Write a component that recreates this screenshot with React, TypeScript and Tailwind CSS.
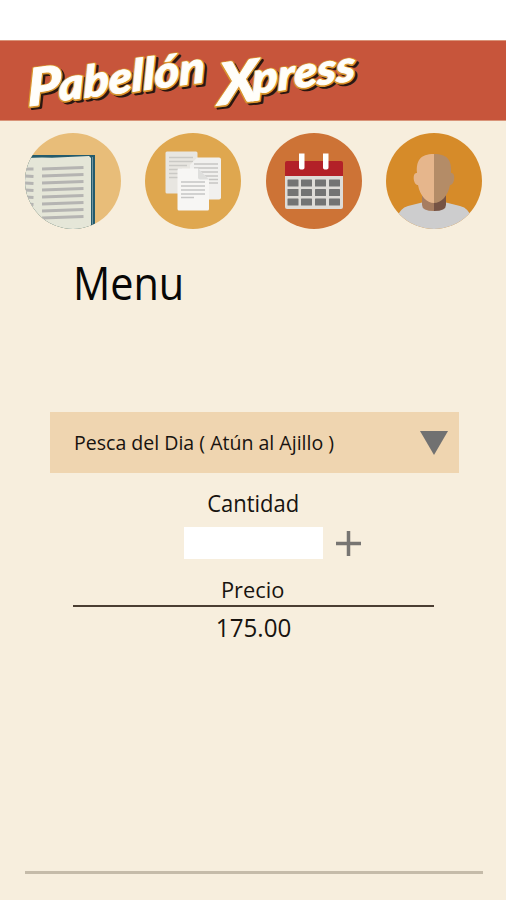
import React from 'react';

function Logo() {
  const words = (
    <>
      <g transform="translate(26 66) rotate(-7.500) skewX(-6)">
        <text fontSize="52" textLength="34" lengthAdjust="spacingAndGlyphs">P</text>
        <text x="32" y="-1" fontSize="44" textLength="149" lengthAdjust="spacingAndGlyphs">abellón</text>
      </g>
      <g transform="translate(219 65) rotate(-7.500) skewX(-6)">
        <text fontSize="58" textLength="41" lengthAdjust="spacingAndGlyphs">X</text>
        <text x="35" y="-7" fontSize="43" textLength="105" lengthAdjust="spacingAndGlyphs">press</text>
      </g>
    </>
  );
  const face = "font-['Lato'] font-black italic";
  return (
    <svg className="block h-full w-[380px] overflow-visible" viewBox="0 0 380 80" role="img" aria-label="Pabellón Xpress">
      <g className={face} transform="translate(2.500 2.500)" fill="#2b1710" stroke="#2b1710" strokeWidth="3" strokeLinejoin="round">{words}</g>
      <g className={face} transform="translate(0 .5)" fill="#d9952f" stroke="#d9952f" strokeWidth="3.500" strokeLinejoin="round">{words}</g>
      <g className={face} fill="#fffefa" stroke="#fffefa" strokeWidth="1" strokeLinejoin="round">{words}</g>
    </svg>
  );
}

function BookIcon() {
  return (
    <svg className="size-24" viewBox="0 0 96 96">
      <clipPath id="book-clip"><circle cx="48" cy="48" r="48" /></clipPath>
      <g clipPath="url(#book-clip)">
        <rect width="96" height="96" fill="#e8bd79" />
        <path d="M0 22h70v71l-4 4H0z" fill="#245b6c" />
        <path d="M67.5 24v72" stroke="#7294a0" strokeWidth="1" />
        <path d="M0 25l17-.5 10 .3 37-1.800L66 25v71H0z" fill="#e5e6d8" />
        <g stroke="#b5b4b2" strokeWidth="3">
          <path d="M17 36l41.5-1.5M17 43l41.5-1.500M17 50l41.5-1.500M17 57l41.500-1.500M17 64l41.500-1.500M17 71l41.500-1.500M17 78l41.500-1.500M17 85l41.500-1.500" />
          <path d="M0 36h8.500M0 43l8.500.5M0 50l8.500.5M0 57l8.500.5M0 64l8.500.5M0 71l8.500.5" />
        </g>
      </g>
    </svg>
  );
}

function PapersIcon() {
  return (
    <svg className="size-24" viewBox="0 0 96 96">
      <circle cx="48" cy="48" r="48" fill="#dfa74f" />
      <rect x="20.500" y="18.500" width="32" height="42" rx="1.500" fill="#e8e6e1" />
      <path d="M24 24.500h24M24 28.500h24M24 32.500h18M24 36.500h13M24 40.500h9M24 44.500h9" stroke="#cac9c5" strokeWidth="1.500" />
      <path d="M52 24.500h22q2 0 2 2v38q0 2-2 2H45V32z" fill="#f1f0ee" />
      <path d="M49 31h24M49 35h24M51 39h22M54 43h19M64 46.500h9M64 50h9" stroke="#c6c5c4" strokeWidth="1.300" />
      <path d="M33 35.500h20L64 47v29q0 1.500-1.500 1.500H34q-1.500 0-1.500-1.500V37z" fill="#f7f6f4" />
      <path d="M53 35.500v9q0 2 2 2h9z" fill="#dfdfdd" />
      <path d="M36 49h24M36 53h24M36 57h24M36 61h24M36 64.500h13" stroke="#c6c6c5" strokeWidth="1.300" />
    </svg>
  );
}

function CalendarIcon() {
  return (
    <svg className="size-24" viewBox="0 0 96 96">
      <circle cx="48" cy="48" r="48" fill="#cd7336" />
      <path d="M19 42h58v32q0 2-2 2H21q-2 0-2-2z" fill="#dedcd8" />
      <path d="M19 43V30q0-2 2-2h54q2 0 2 2v13z" fill="#b32128" />
      <path d="M33 20.500h5.500v14q0 2-2.750 2T33 34.500zM57 20.500h5.500v14q0 2-2.750 2T57 34.500z" fill="#fff" />
      <g fill="#737474">
        {[46.5, 56, 65.5].map(y => [21.5, 35, 49, 63].map(x => (
          <rect key={`${x}-${y}`} x={x} y={y} width="11" height="7" rx=".5" />
        )))}
      </g>
    </svg>
  );
}

function PersonIcon() {
  return (
    <svg className="size-24" viewBox="0 0 96 96">
      <clipPath id="person-clip"><circle cx="48" cy="48" r="48" /></clipPath>
      <g clipPath="url(#person-clip)">
        <rect width="96" height="96" fill="#d68b29" />
        <path d="M10 100V86q4-11 12-13l14-3.500h24L74 73q9 2 12 13v14z" fill="#cdcdce" />
        <path d="M36 60h12v18q-12 0-12-6z" fill="#a77d60" />
        <path d="M48 60h12v12q0 6-12 6z" fill="#765344" />
        <path d="M48 21c-14 0-18 7-17 19-5-1-4 12 1 12 2 11 9 18 16 18z" fill="#e6b68c" />
        <path d="M48 21c14 0 18 7 17 19 5-1 4 12-1 12-2 11-9 18-16 18z" fill="#b48c67" />
      </g>
    </svg>
  );
}

export default function App() {
  return (
    <main className="flex h-[900px] w-[506px] flex-col overflow-hidden bg-[#f7eedd] pt-10 font-['Open_Sans','Noto_Sans',sans-serif] text-[#17130f] shadow-[inset_0_40px_0_#fff]">
      <header className="h-[81px] shrink-0 border-y border-[#d99479] bg-[#c7553b]">
        <Logo />
      </header>
      <nav className="mt-3 flex h-24 shrink-0 justify-between pr-[23.5px] pl-[24.5px]">
        <button aria-label="Menu"><BookIcon /></button>
        <button aria-label="Pedidos"><PapersIcon /></button>
        <button aria-label="Reservaciones"><CalendarIcon /></button>
        <button aria-label="Perfil"><PersonIcon /></button>
      </nav>
      <h1 className="mt-[21px] ml-[73px] h-[64px] w-max origin-left scale-x-[0.9] text-[46px] leading-[64px] text-[#080706]">Menu</h1>
      <section className="mt-[98px] flex flex-col items-center">
        <button className="ml-[2px] flex h-[61px] w-[409px] items-center justify-between bg-[#efd5b0] pr-[11px] pl-6">
          <span className="w-max origin-left scale-x-[0.953] whitespace-nowrap text-[20.5px]">Pesca del Dia ( Atún al Ajillo )</span>
          <svg className="h-6 w-7 shrink-0" viewBox="0 0 28 24"><path d="M0 0h28L14 24z" fill="#717171" /></svg>
        </button>
        <label className="mt-[13px] h-[34px] scale-x-[0.955] text-[23px] leading-[34px]">Cantidad</label>
        <div className="mt-[7px] ml-[39px] flex h-8 items-center gap-[13px]">
          <input aria-label="Cantidad" className="h-8 w-[139px] bg-white outline-none" />
          <svg className="size-[25px]" viewBox="0 0 25 25"><path d="M12.500 0v25M0 12.500h25" stroke="#777572" strokeWidth="3.500" /></svg>
        </div>
        <div className="mt-4 h-[32px] w-[361px] border-b-2 border-[#4b3e32] text-center text-[22.5px] leading-[29px]"><span className="inline-block scale-x-[0.97]">Precio</span></div>
        <output className="mt-[2px] ml-[2px] h-[36px] scale-x-[0.93] text-[26px] leading-[36px]">175.00</output>
      </section>
      <hr className="mt-auto mr-[23px] mb-[26px] ml-[25px] border-t-[3px] border-[#c5bba9]" />
    </main>
  );
}
